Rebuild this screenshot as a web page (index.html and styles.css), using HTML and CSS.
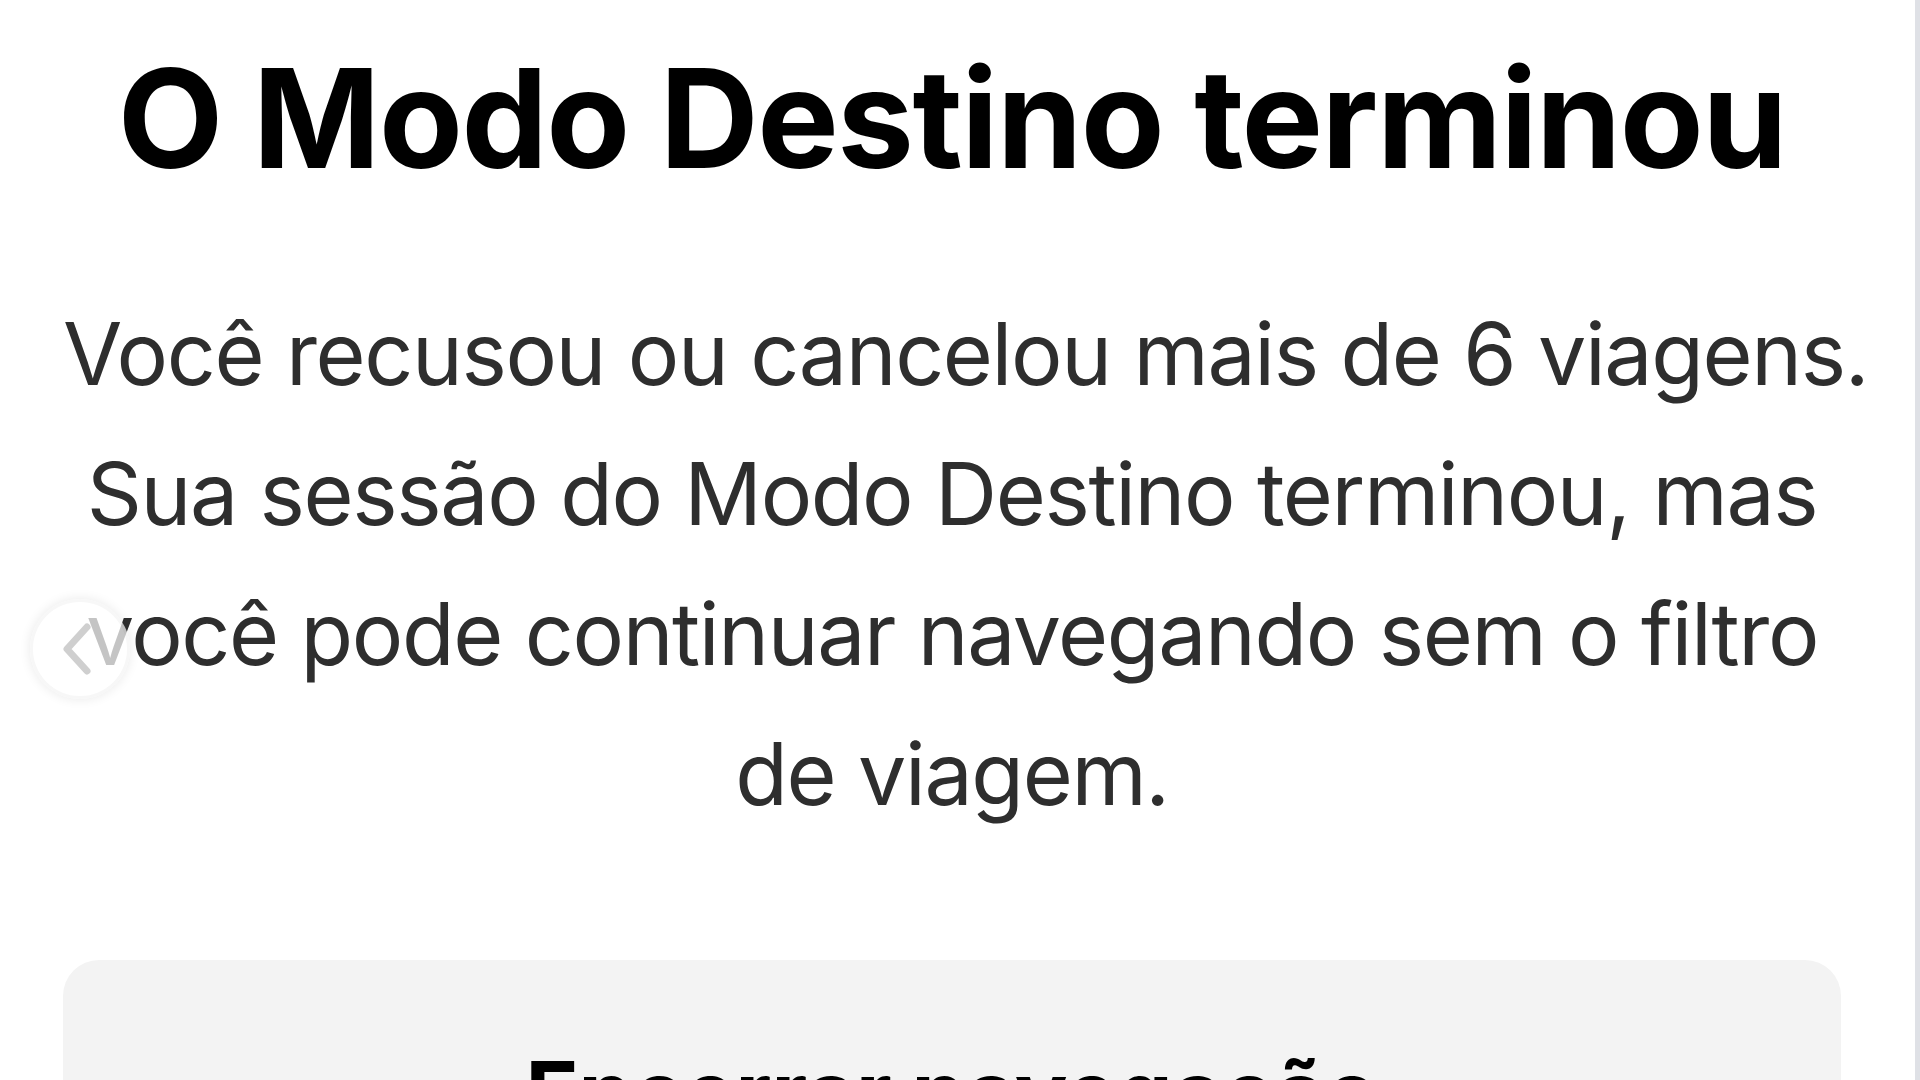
FILE: index.html
```html
<!DOCTYPE html>
<html lang="pt-BR">
<head>
<meta charset="utf-8">
<title>O Modo Destino terminou</title>
<link rel="stylesheet" href="styles.css">
</head>
<body>
<div class="page">
  <main class="sheet">
    <h1 class="title">O Modo Destino terminou</h1>
    <p class="message">Você recusou ou cancelou mais de 6 viagens.<br>Sua sessão do Modo Destino terminou, mas<br>você pode continuar navegando sem o filtro<br>de viagem.</p>
    <button class="action">Encerrar navegação</button>
    <div class="back-bubble">
      <svg class="chevron" viewBox="0 0 40 60" width="40" height="60"><path d="M30 8 L10 30 L30 52" fill="none" stroke="#cfcfcf" stroke-width="7" stroke-linecap="round" stroke-linejoin="round"/></svg>
    </div>
  </main>
  <div class="edge"></div>
</div>
</body>
</html>
```

FILE: styles.css
```css
html, body {
  margin: 0;
  padding: 0;
  background: #ffffff;
  height: 100%;
  overflow: hidden;
}

.page {
  display: flex;
  width: 1920px;
  height: 1080px;
}

.sheet {
  position: relative;
  width: 1904px;
  flex: none;
  padding: 36px 63px 0;
  box-sizing: border-box;
  display: flex;
  flex-direction: column;
  align-items: stretch;
}

.edge {
  flex: none;
  width: 5px;
  margin-left: 11px;
  background: #dfe1e6;
}

.title {
  margin: 0;
  font-family: Inter, "Liberation Sans", sans-serif;
  font-weight: 700;
  font-size: 137px;
  line-height: 164px;
  letter-spacing: -1.5px;
  color: #000000;
  text-align: center;
  white-space: nowrap;
}

.message {
  margin: 84px 0 0;
  font-family: Inter, "Liberation Sans", sans-serif;
  font-weight: 400;
  font-size: 86px;
  line-height: 140px;
  letter-spacing: -1.4px;
  color: #2e2e2e;
  text-align: center;
  white-space: nowrap;
}

.action {
  margin-top: 116px;
  width: 100%;
  height: 260px;
  border: none;
  border-radius: 36px;
  background: #f3f3f3;
  padding: 80px 0 0;
  font-family: Inter, "Liberation Sans", sans-serif;
  font-weight: 700;
  font-size: 88px;
  line-height: 106px;
  letter-spacing: -0.6px;
  color: #000000;
  box-sizing: border-box;
  display: flex;
  justify-content: center;
  align-items: flex-start;
}

.back-bubble {
  position: absolute;
  left: 30px;
  top: 599px;
  width: 100px;
  height: 100px;
  border-radius: 50%;
  background: rgba(255, 255, 255, 0.72);
  border: 3px solid rgba(0, 0, 0, 0.03);
  box-shadow: 0 0 12px rgba(0, 0, 0, 0.09);
  box-sizing: border-box;
  display: flex;
  align-items: center;
  justify-content: center;
}

.chevron {
  display: block;
  margin-left: -6px;
}
```
